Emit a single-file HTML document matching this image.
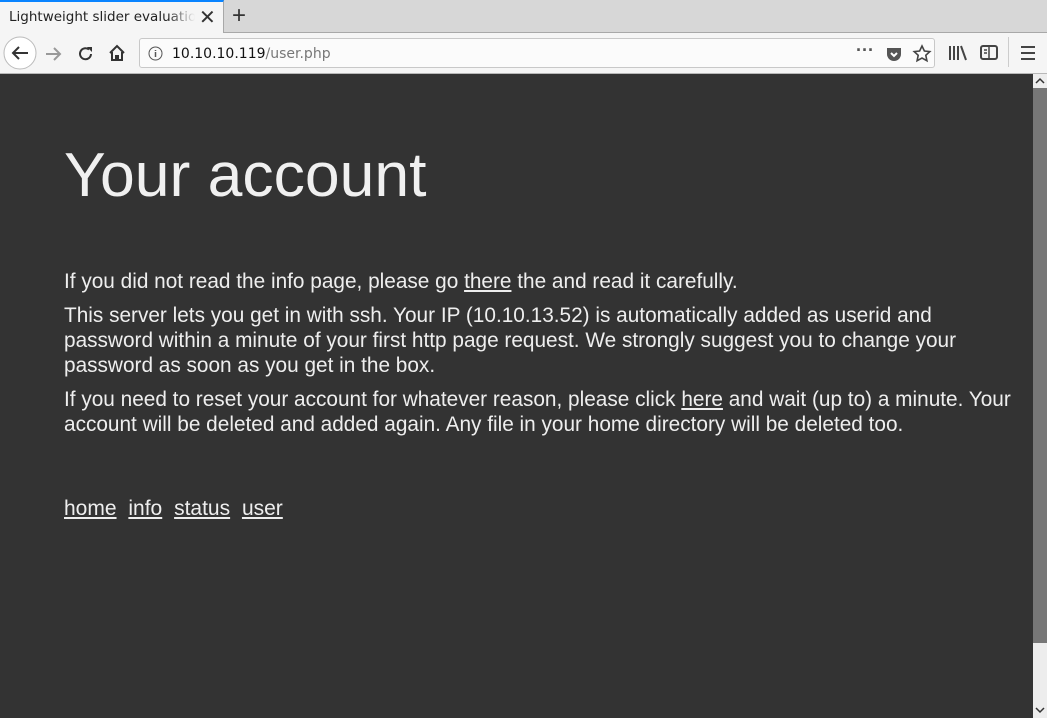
<!DOCTYPE html>
<html><head><style>
*{margin:0;padding:0;box-sizing:border-box}
body{width:1047px;height:718px;overflow:hidden;background:#333;font-family:"Liberation Sans",sans-serif;position:relative}
.tabbar{position:absolute;left:0;top:0;width:1047px;height:33px;background:#d7d7d7;border-bottom:1px solid #a8a8a8}
.tab{position:absolute;left:0;top:0;width:224px;height:33px;background:#f5f5f5;border-top:2px solid #0a84ff;border-right:1px solid #a8a8a8}
.tab span{position:absolute;left:9px;top:7px;font-family:"DejaVu Sans",sans-serif;font-size:13.5px;color:#222;white-space:nowrap;width:186px;overflow:hidden;-webkit-mask-image:linear-gradient(90deg,#000 85%,transparent)}
.tab b{position:absolute;left:199px;top:3px;font-weight:normal;font-size:20px;color:#333}
.plus{position:absolute;left:232px;top:2px;font-size:24px;color:#333}
.toolbar{position:absolute;left:0;top:33px;width:1047px;height:41px;background:#f5f5f5;border-bottom:1px solid #b8b8b8}
.url{position:absolute;left:139px;top:5px;width:796px;height:30px;background:#fbfbfb;border:1px solid #c8c8c8;border-radius:3px}
.url span{position:absolute;left:32px;top:7px;font-family:"DejaVu Sans",sans-serif;font-size:14px;color:#111}
.url span i{font-style:normal;color:#777}
.content{position:absolute;left:64px;top:74px;color:#eee;width:960px}
h1{font-weight:300;font-size:62.5px;margin-top:65px;letter-spacing:0px;color:#f0f0f0}
p{font-size:20.8px;line-height:25px;margin-bottom:9px;font-weight:300}
a{color:#eee;text-decoration:underline}
.nav{position:absolute;left:64px;top:496px;font-size:21px;color:#eee}
.nav a{margin-right:6px}
.sb{position:absolute;left:1033px;top:74px;width:14px;height:644px;background:#ededed}
.thumb{position:absolute;left:1033px;top:88px;width:14px;height:555px;background:#777}
</style></head><body>
<div class="tabbar"><div class="tab"><span>Lightweight slider evaluation</span><b>✕</b></div><div class="plus">+</div></div>
<div class="toolbar">
<svg style="position:absolute;left:3px;top:3px" width="34" height="34"><circle cx="17" cy="17" r="16" fill="#fff" stroke="#bbb"/><path d="M25 17H10M16 11l-6 6 6 6" stroke="#333" stroke-width="2" fill="none"/></svg>
<svg style="position:absolute;left:44px;top:12px" width="18" height="18"><path d="M2 9h14M10 3l6 6-6 6" stroke="#999" stroke-width="2" fill="none"/></svg>
<svg style="position:absolute;left:77px;top:12px" width="18" height="18"><path d="M14 9a5.5 5.5 0 1 1-2-4.5" stroke="#333" stroke-width="2" fill="none"/><path d="M10 2h5v5z" fill="#333"/></svg>
<svg style="position:absolute;left:108px;top:11px" width="18" height="18"><path d="M2 9L9 2l7 7M4 8v8h4v-4h2v4h4V8" stroke="#333" stroke-width="2" fill="none"/></svg>
<div class="url"><svg style="position:absolute;left:8px;top:7px" width="15" height="15"><circle cx="7.5" cy="7.5" r="6.5" stroke="#555" fill="none"/><path d="M7.5 6v5M7.5 4v1" stroke="#555" stroke-width="1.5"/></svg><span>10.10.10.119<i>/user.php</i></span>
<span style="left:716px;top:1px;color:#555;font-size:18px;font-weight:bold;font-family:'Liberation Sans'">···</span>
<svg style="position:absolute;left:745px;top:6px" width="18" height="18"><path d="M2 3h14v6a7 7 0 0 1-14 0z" fill="#555"/><path d="M6 8l3 3 3-3" stroke="#fff" stroke-width="2" fill="none"/></svg>
<svg style="position:absolute;left:772px;top:5px" width="20" height="20"><path d="M10 2l2.4 5 5.4.6-4 3.7 1.1 5.4L10 14l-4.9 2.7 1.1-5.4-4-3.7 5.4-.6z" stroke="#444" stroke-width="1.6" fill="none"/></svg></div>
<svg style="position:absolute;left:948px;top:11px" width="20" height="18"><path d="M2 2v14M6 2v14M10 2v14M13 2l5 14" stroke="#444" stroke-width="2"/></svg>
<svg style="position:absolute;left:980px;top:11px" width="18" height="18"><rect x="1" y="2" width="16" height="13" rx="2" stroke="#444" stroke-width="2" fill="none"/><path d="M9 2v13M4 6h3M4 9h3" stroke="#444" stroke-width="1.5"/></svg>
<div style="position:absolute;left:1008px;top:4px;width:1px;height:30px;background:#ccc"></div>
<svg style="position:absolute;left:1020px;top:12px" width="16" height="16"><path d="M1 2h14M1 8h14M1 14h14" stroke="#444" stroke-width="2"/></svg>
</div>
<div class="content">
<h1>Your account</h1>
<p style="margin-top:58px">If you did not read the info page, please go <a>there</a> the and read it carefully.</p>
<p>This server lets you get in with ssh. Your IP (10.10.13.52) is automatically added as userid and password within a minute of your first http page request. We strongly suggest you to change your password as soon as you get in the box.</p>
<p>If you need to reset your account for whatever reason, please click <a>here</a> and wait (up to) a minute. Your account will be deleted and added again. Any file in your home directory will be deleted too.</p>
</div>
<div class="nav" style="top:497px"><a>home</a> <a>info</a> <a>status</a> <a>user</a></div>
<div class="sb"></div><div class="thumb"></div>
<svg style="position:absolute;left:1035px;top:77px" width="10" height="8"><path d="M1 6l4-4 4 4" stroke="#333" stroke-width="1.5" fill="none"/></svg>
<svg style="position:absolute;left:1035px;top:706px" width="10" height="8"><path d="M1 2l4 4 4-4" stroke="#333" stroke-width="1.5" fill="none"/></svg>
</body></html>
